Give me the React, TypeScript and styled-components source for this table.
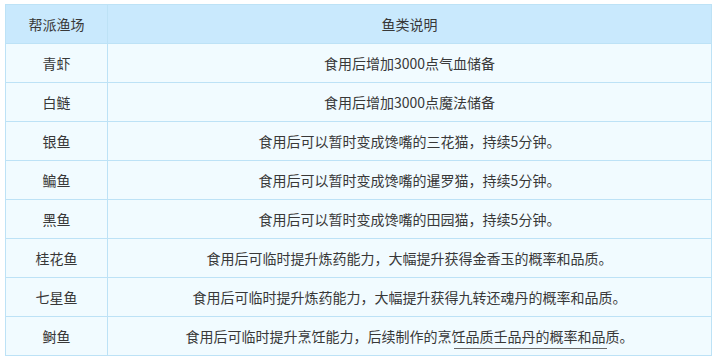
import styled, { createGlobalStyle } from 'styled-components'

const GlobalStyle = createGlobalStyle`
  body {
    margin: 0;
    padding: 4px 5px;
    background: #fff;
    font-family: "Noto Sans CJK SC", "Microsoft YaHei", sans-serif;
  }
`

const Table = styled.table`
  width: 707px;
  border-collapse: collapse;
  table-layout: fixed;
  font-size: 14px;
  color: #383838;
`

const HeadCell = styled.th<{ $width?: number }>`
  width: ${(p) => (p.$width ? `${p.$width}px` : 'auto')};
  height: 38px;
  padding: 0;
  background: #c9e9fd;
  border: 1px solid #bde2f6;
  font-weight: normal;
  text-align: center;
`

const Cell = styled.td`
  position: relative;
  height: 38px;
  padding: 0;
  background: #f1fbff;
  border: 1px solid #bde2f6;
  text-align: center;
  line-height: 20px;
`

// thin grey stroke that sits under the last row's text in the original
const Stroke = styled.span`
  position: absolute;
  left: 346px;
  bottom: 6px;
  width: 153px;
  height: 1px;
  background: #6b6b6b;
`

const rows = [
  ['青虾', '食用后增加3000点气血储备'],
  ['白鲢', '食用后增加3000点魔法储备'],
  ['银鱼', '食用后可以暂时变成馋嘴的三花猫，持续5分钟。'],
  ['鳊鱼', '食用后可以暂时变成馋嘴的暹罗猫，持续5分钟。'],
  ['黑鱼', '食用后可以暂时变成馋嘴的田园猫，持续5分钟。'],
  ['桂花鱼', '食用后可临时提升炼药能力，大幅提升获得金香玉的概率和品质。'],
  ['七星鱼', '食用后可临时提升炼药能力，大幅提升获得九转还魂丹的概率和品质。'],
  ['鲥鱼', '食用后可临时提升烹饪能力，后续制作的烹饪品质壬品丹的概率和品质。'],
]

const App = () => {
  return (
    <>
      <GlobalStyle />
      <Table>
        <thead>
          <tr>
            <HeadCell $width={101}>帮派渔场</HeadCell>
            <HeadCell>鱼类说明</HeadCell>
          </tr>
        </thead>
        <tbody>
          {rows.map(([fish, desc], i) => (
            <tr key={fish}>
              <Cell>{fish}</Cell>
              <Cell>
                {desc}
                {i === rows.length - 1 && <Stroke />}
              </Cell>
            </tr>
          ))}
        </tbody>
      </Table>
    </>
  )
}

export default App
